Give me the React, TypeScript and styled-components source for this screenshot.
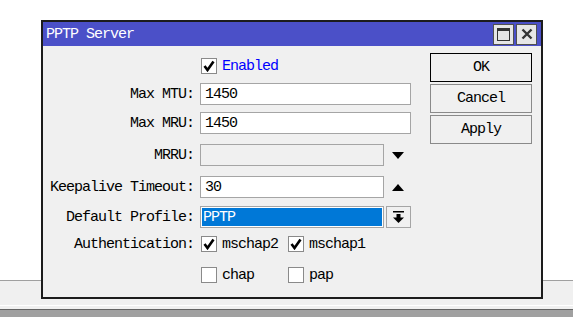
import React from "react";
import styled, { createGlobalStyle } from "styled-components";

const GlobalStyle = createGlobalStyle`
  html, body {
    margin: 0;
    padding: 0;
    background: #ffffff;
  }
  body {
    font-family: "Liberation Mono", "DejaVu Sans Mono", monospace;
    font-size: 15px;
    letter-spacing: -1px;
    color: #000000;
  }
`;

const Desktop = styled.div`
  position: relative;
  width: 573px;
  height: 317px;
  overflow: hidden;
  display: flex;
  flex-direction: column;
`;

const Blank = styled.div`
  height: 280px;
  background: #ffffff;
`;

const Panel = styled.div`
  height: 24px;
  border-top: 1px solid #a0a0a0;
  border-bottom: 1px solid #ffffff;
  background: #f0f0f0;
`;

const PanelGap = styled.div`
  height: 3px;
  background: #f0f0f0;
`;

const StatusBar = styled.div`
  flex: 1;
  border-top: 1px solid #646464;
  background: #a0a0a0;
`;

const Window = styled.div`
  position: absolute;
  left: 41px;
  top: 20px;
  width: 502px;
  height: 279px;
  box-sizing: border-box;
  border: 2px solid #1c1c1c;
  background: #f0f0f0;
  display: flex;
  flex-direction: column;
`;

const TitleBar = styled.div`
  height: 24px;
  background: #4b50c8;
  display: flex;
  align-items: center;
  padding: 0 4px 0 3px;
`;

const Title = styled.span`
  color: #ffffff;
  flex: 1;
`;

const TitleButton = styled.div`
  width: 21px;
  height: 21px;
  box-sizing: border-box;
  border: 1px solid #505050;
  background: #e6e6e6;
  display: flex;
  align-items: center;
  justify-content: center;
  margin-left: 2px;
`;

const Body = styled.div`
  flex: 1;
  display: flex;
`;

const Form = styled.div`
  flex: 1;
  display: flex;
  flex-direction: column;
  padding-top: 12px;
`;

const Row = styled.div<{ $mt: number; $h?: number }>`
  display: flex;
  align-items: center;
  margin-top: ${(p) => p.$mt}px;
  height: ${(p) => p.$h ?? 22}px;
`;

const Label = styled.div`
  width: 151px;
  margin-right: 6px;
  text-align: right;
  white-space: nowrap;
`;

const Input = styled.div<{ $w: number; $disabled?: boolean }>`
  width: ${(p) => p.$w}px;
  height: 22px;
  box-sizing: border-box;
  border: 1px solid #a5a5a5;
  background: ${(p) => (p.$disabled ? "#f0f0f0" : "#ffffff")};
  padding-left: 4px;
  display: flex;
  align-items: center;
`;

const Select = styled.div`
  width: 184px;
  height: 22px;
  box-sizing: border-box;
  border: 1px solid #a5a5a5;
  background: #ffffff;
  padding: 1px;
  display: flex;
`;

const Selected = styled.div`
  flex: 1;
  background: #0078d7;
  color: #ffffff;
  padding-left: 1px;
  display: flex;
  align-items: center;
`;

const Arrow = styled.div`
  width: 27px;
  display: flex;
  align-items: center;
  justify-content: center;
`;

const DropButton = styled.div`
  width: 25px;
  height: 22px;
  margin-left: 2px;
  box-sizing: border-box;
  border: 1px solid #a5a5a5;
  background: #f0f0f0;
  display: flex;
  align-items: center;
  justify-content: center;
`;

const Check = styled.div<{ $w?: number }>`
  width: ${(p) => p.$w ?? 87}px;
  display: flex;
  align-items: center;
  gap: 5px;
`;

const Box = styled.div`
  width: 16px;
  height: 16px;
  box-sizing: border-box;
  border: 1px solid #8a8a8a;
  background: #ffffff;
  display: flex;
  align-items: center;
  justify-content: center;
  margin-left: 1px;
`;

const CheckText = styled.span<{ $blue?: boolean }>`
  color: ${(p) => (p.$blue ? "#0000ff" : "#000000")};
`;

const Buttons = styled.div`
  width: 102px;
  margin: 7px 9px 0 0;
  display: flex;
  flex-direction: column;
  gap: 2px;
`;

const Button = styled.div<{ $default?: boolean }>`
  height: 29px;
  box-sizing: border-box;
  border: 1px solid ${(p) => (p.$default ? "#000000" : "#8a8a8a")};
  background: #f0f0f0;
  display: flex;
  align-items: center;
  justify-content: center;
`;

const Tick = () => (
  <svg width="12" height="12" viewBox="0 0 12 12">
    <path d="M1.5 6 L4.5 10 L10.5 1.5" fill="none" stroke="#000" strokeWidth="2.6" />
  </svg>
);

const CheckItem = ({ label, checked, blue, w }: { label: string; checked?: boolean; blue?: boolean; w?: number }) => (
  <Check $w={w}>
    <Box>{checked && <Tick />}</Box>
    <CheckText $blue={blue}>{label}</CheckText>
  </Check>
);

export default function App() {
  return (
    <Desktop>
      <GlobalStyle />
      <Blank />
      <Panel />
      <PanelGap />
      <StatusBar />
      <Window>
        <TitleBar>
          <Title>PPTP Server</Title>
          <TitleButton>
            <svg width="13" height="13" viewBox="0 0 13 13">
              <rect x="0.5" y="0.5" width="12" height="12" fill="none" stroke="#333" />
              <rect x="0" y="0" width="13" height="3" fill="#333" />
            </svg>
          </TitleButton>
          <TitleButton>
            <svg width="12" height="12" viewBox="0 0 12 12">
              <path d="M1.5 1.5 L10.5 10.5 M10.5 1.5 L1.5 10.5" stroke="#333" strokeWidth="2.4" />
            </svg>
          </TitleButton>
        </TitleBar>
        <Body>
          <Form>
            <Row $mt={0} $h={16}>
              <Label />
              <CheckItem label="Enabled" checked blue w={120} />
            </Row>
            <Row $mt={9}>
              <Label>Max MTU:</Label>
              <Input $w={211}>1450</Input>
            </Row>
            <Row $mt={7}>
              <Label>Max MRU:</Label>
              <Input $w={211}>1450</Input>
            </Row>
            <Row $mt={10}>
              <Label>MRRU:</Label>
              <Input $w={184} $disabled />
              <Arrow>
                <svg width="12" height="7" viewBox="0 0 12 7">
                  <path d="M0 0 H12 L6 7 Z" fill="#000" />
                </svg>
              </Arrow>
            </Row>
            <Row $mt={10}>
              <Label>Keepalive Timeout:</Label>
              <Input $w={184}>30</Input>
              <Arrow>
                <svg width="12" height="7" viewBox="0 0 12 7">
                  <path d="M0 7 H12 L6 0 Z" fill="#000" />
                </svg>
              </Arrow>
            </Row>
            <Row $mt={8}>
              <Label>Default Profile:</Label>
              <Select>
                <Selected>PPTP</Selected>
              </Select>
              <DropButton>
                <svg width="11" height="12" viewBox="0 0 11 12">
                  <rect x="0" y="0" width="11" height="1.5" fill="#000" />
                  <rect x="3.5" y="3" width="4" height="4" fill="#000" />
                  <path d="M0 6.5 H11 L5.5 12 Z" fill="#000" />
                </svg>
              </DropButton>
            </Row>
            <Row $mt={5}>
              <Label>Authentication:</Label>
              <CheckItem label="mschap2" checked />
              <CheckItem label="mschap1" checked />
            </Row>
            <Row $mt={9}>
              <Label />
              <CheckItem label="chap" />
              <CheckItem label="pap" />
            </Row>
          </Form>
          <Buttons>
            <Button $default>OK</Button>
            <Button>Cancel</Button>
            <Button>Apply</Button>
          </Buttons>
        </Body>
      </Window>
    </Desktop>
  );
}
